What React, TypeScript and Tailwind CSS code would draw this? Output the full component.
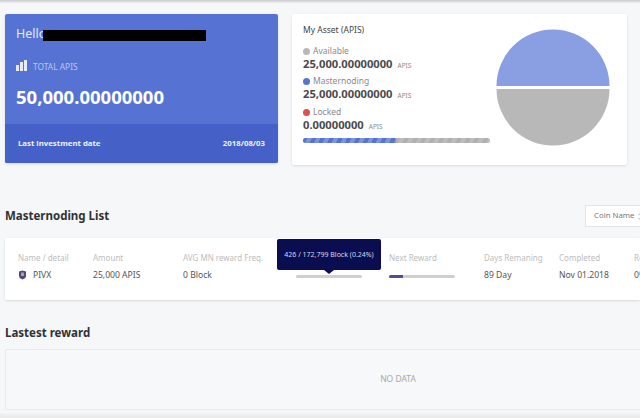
export default function App() {
  const font = { fontFamily: '"Noto Sans", sans-serif' };
  return (
    <div style={font} className="relative h-[418px] w-[640px] overflow-hidden bg-[#f6f7f9] text-[#3c3c3c]">
      <div className="h-[3px] bg-gradient-to-b from-[#c9cacc] to-[#eff0f2]" />
      <div className="flex items-start pl-[5px] pt-[11px]">
        <div className="flex h-[149px] w-[273px] shrink-0 flex-col overflow-hidden rounded-[2px] bg-[#5673d3] text-white shadow-sm">
          <div className="flex-1 pl-[11px] pr-3 pt-[10px]">
            <div className="relative h-[20px] text-[12.5px] leading-[20px] text-[#e4e9f8]">
              Hello
              <span className="absolute left-[27px] top-[6px] h-[11px] w-[163px] bg-black" />
            </div>
            <div className="mt-[16px] flex h-[14px] items-center gap-[6px]">
              <svg className="-mt-[4px]" width="11" height="11" viewBox="0 0 11 11" fill="#e8ecfa">
                <rect x="0" y="5" width="3" height="6" />
                <rect x="4" y="2" width="3" height="9" />
                <rect x="8" y="0" width="3" height="11" />
              </svg>
              <span className="text-[8.4px] leading-none text-[#b9c6ee]">TOTAL APIS</span>
            </div>
            <div className="mt-[11px] text-[18.5px] font-bold leading-[24px] text-white">50,000.00000000</div>
          </div>
          <div className="flex h-[39px] items-center justify-between bg-[#4561c8] pl-[13px] pr-[13px] text-[7.8px] font-bold leading-none text-[#eef1fb]">
            <span>Last investment date</span>
            <span>2018/08/03</span>
          </div>
        </div>
        <div className="ml-[14px] flex h-[151px] w-[335px] shrink-0 rounded-[2px] bg-white pl-[11px] pr-[18px] pt-[9px] shadow-sm">
          <div className="w-[187px] shrink-0">
            <div className="text-[8.5px] leading-[14px] text-[#444]">My Asset (APIS)</div>
            <Legend top="mt-[8px]" color="bg-[#b8b8b8]" label="Available" value="25,000.00000000" />
            <Legend top="mt-[4px]" color="bg-[#5673d3]" label="Masternoding" value="25,000.00000000" />
            <Legend top="mt-[5px]" color="bg-[#d9534f]" label="Locked" value="0.00000000" />
            <div className="mt-[6px] flex h-[5px] overflow-hidden rounded-[3px] bg-[repeating-linear-gradient(115deg,#bdbdbd_0,#bdbdbd_4px,#b0b0b0_4px,#b0b0b0_8px)]">
              <div className="h-full w-[93px] bg-[repeating-linear-gradient(115deg,#5673d3_0,#5673d3_4px,#7b93e0_4px,#7b93e0_8px)]" />
            </div>
          </div>
          <svg className="ml-[6px] mt-[6px] shrink-0" width="114" height="118" viewBox="0 0 114 118">
            <path d="M0.5 57 A56.5 56.5 0 0 1 113.5 57 Z" fill="#8a9ee2" />
            <path d="M0.5 60 A56.5 56.5 0 0 0 113.5 60 Z" fill="#b8b8b8" />
          </svg>
        </div>
      </div>

      <div className="relative mt-[39px] flex h-[24px] items-center pl-[5px]">
        <h2 className="text-[11.5px] font-bold leading-none text-[#2f3237]">Masternoding List</h2>
        <div className="absolute left-[585px] top-[1px] flex h-[22px] w-[70px] items-center rounded-[1px] border border-[#e3e4e7] bg-white pl-[8px] text-[7.8px] text-[#777]">
          Coin Name
          <svg className="ml-[3px]" width="5" height="9" viewBox="0 0 5 9" fill="none" stroke="#999" strokeWidth="0.8">
            <path d="M0.5 3 L2.5 1 L4.5 3 M0.5 6 L2.5 8 L4.5 6" />
          </svg>
        </div>
      </div>

      <div className="relative ml-[5px] mt-[10px] flex h-[62px] rounded-l-[2px] bg-white pl-[13px] pt-[14px] text-[8.6px] shadow-sm">
        <Col w="w-[75px]" head="Name / detail">
          <span className="flex items-center gap-[6px]">
            <svg width="9" height="10" viewBox="0 0 9 10">
              <path d="M1 1.5 L4.5 0.5 L8 1.5 L8 6 Q8 8 4.5 9.5 Q1 8 1 6 Z" fill="#54496f" />
              <rect x="3" y="2.5" width="3" height="3.5" fill="#a99cc4" />
            </svg>
            PIVX
          </span>
        </Col>
        <Col w="w-[90px]" head="Amount">25,000 APIS</Col>
        <Col w="w-[113px]" head="AVG MN reward Freq.">0 Block</Col>
        <div className="w-[93px] shrink-0 pt-[23px]">
          <div className="h-[3px] w-[66px] rounded-full bg-[#cfcfcf]" />
        </div>
        <div className="w-[95px] shrink-0">
          <div className="h-[12px] text-[8px] leading-[12px] text-[#bdbdbd]">Next Reward</div>
          <div className="mt-[11px] h-[3px] w-[66px] overflow-hidden rounded-full bg-[#cfcfcf]">
            <div className="h-full w-[14px] bg-[#5a4a8a]" />
          </div>
        </div>
        <Col w="w-[75px]" head="Days Remaning">89 Day</Col>
        <Col w="w-[75px]" head="Completed">Nov 01.2018</Col>
        <Col w="w-[40px]" head="Re">0%</Col>

        <div className="absolute left-[272px] top-[1px] flex h-[31px] w-[104px] items-center justify-center rounded-[2px] bg-[#0a0d4f] text-[7px] leading-none text-[#d5d7ee]">
          426 / 172,799 Block (0.24%)
          <span className="absolute -bottom-[4px] left-[47px] h-0 w-0 border-x-[5px] border-t-[4px] border-x-transparent border-t-[#0a0d4f]" />
        </div>
      </div>

      <h2 className="ml-[5px] mt-[25px] text-[11.5px] font-bold leading-[16px] text-[#2f3237]">Lastest reward</h2>
      <div className="ml-[5px] mt-[8px] flex h-[61px] items-center justify-center rounded-l-[2px] border border-r-0 border-[#e9eaec] bg-[#f7f8fa] pl-[150px] text-[8.5px] text-[#a8a8a8]">
        NO DATA
      </div>
      <div className="absolute bottom-0 left-0 h-[5px] w-full bg-gradient-to-b from-[#f3f4f6] to-[#e6e7e9]" />
    </div>
  );
}

function Legend({ top, color, label, value }: { top: string; color: string; label: string; value: string }) {
  return (
    <div className={top}>
      <div className="flex h-[13px] items-center gap-[3px] text-[8.5px] leading-none text-[#8a8a8a]">
        <span className={`h-[7px] w-[7px] rounded-full ${color}`} />
        {label}
      </div>
      <div className="flex h-[13px] items-baseline gap-[5px] leading-none">
        <span className="text-[11.2px] font-bold text-[#4a4a4a]">{value}</span>
        <span className="text-[6.5px] text-[#8a8a8a]">APIS</span>
      </div>
    </div>
  );
}

function Col({ w, head, children }: { w: string; head: string; children: React.ReactNode }) {
  return (
    <div className={`${w} shrink-0 whitespace-nowrap`}>
      <div className="h-[12px] text-[8px] leading-[12px] text-[#bdbdbd]">{head}</div>
      <div className="mt-[4px] h-[14px] leading-[14px] text-[#555]">{children}</div>
    </div>
  );
}
